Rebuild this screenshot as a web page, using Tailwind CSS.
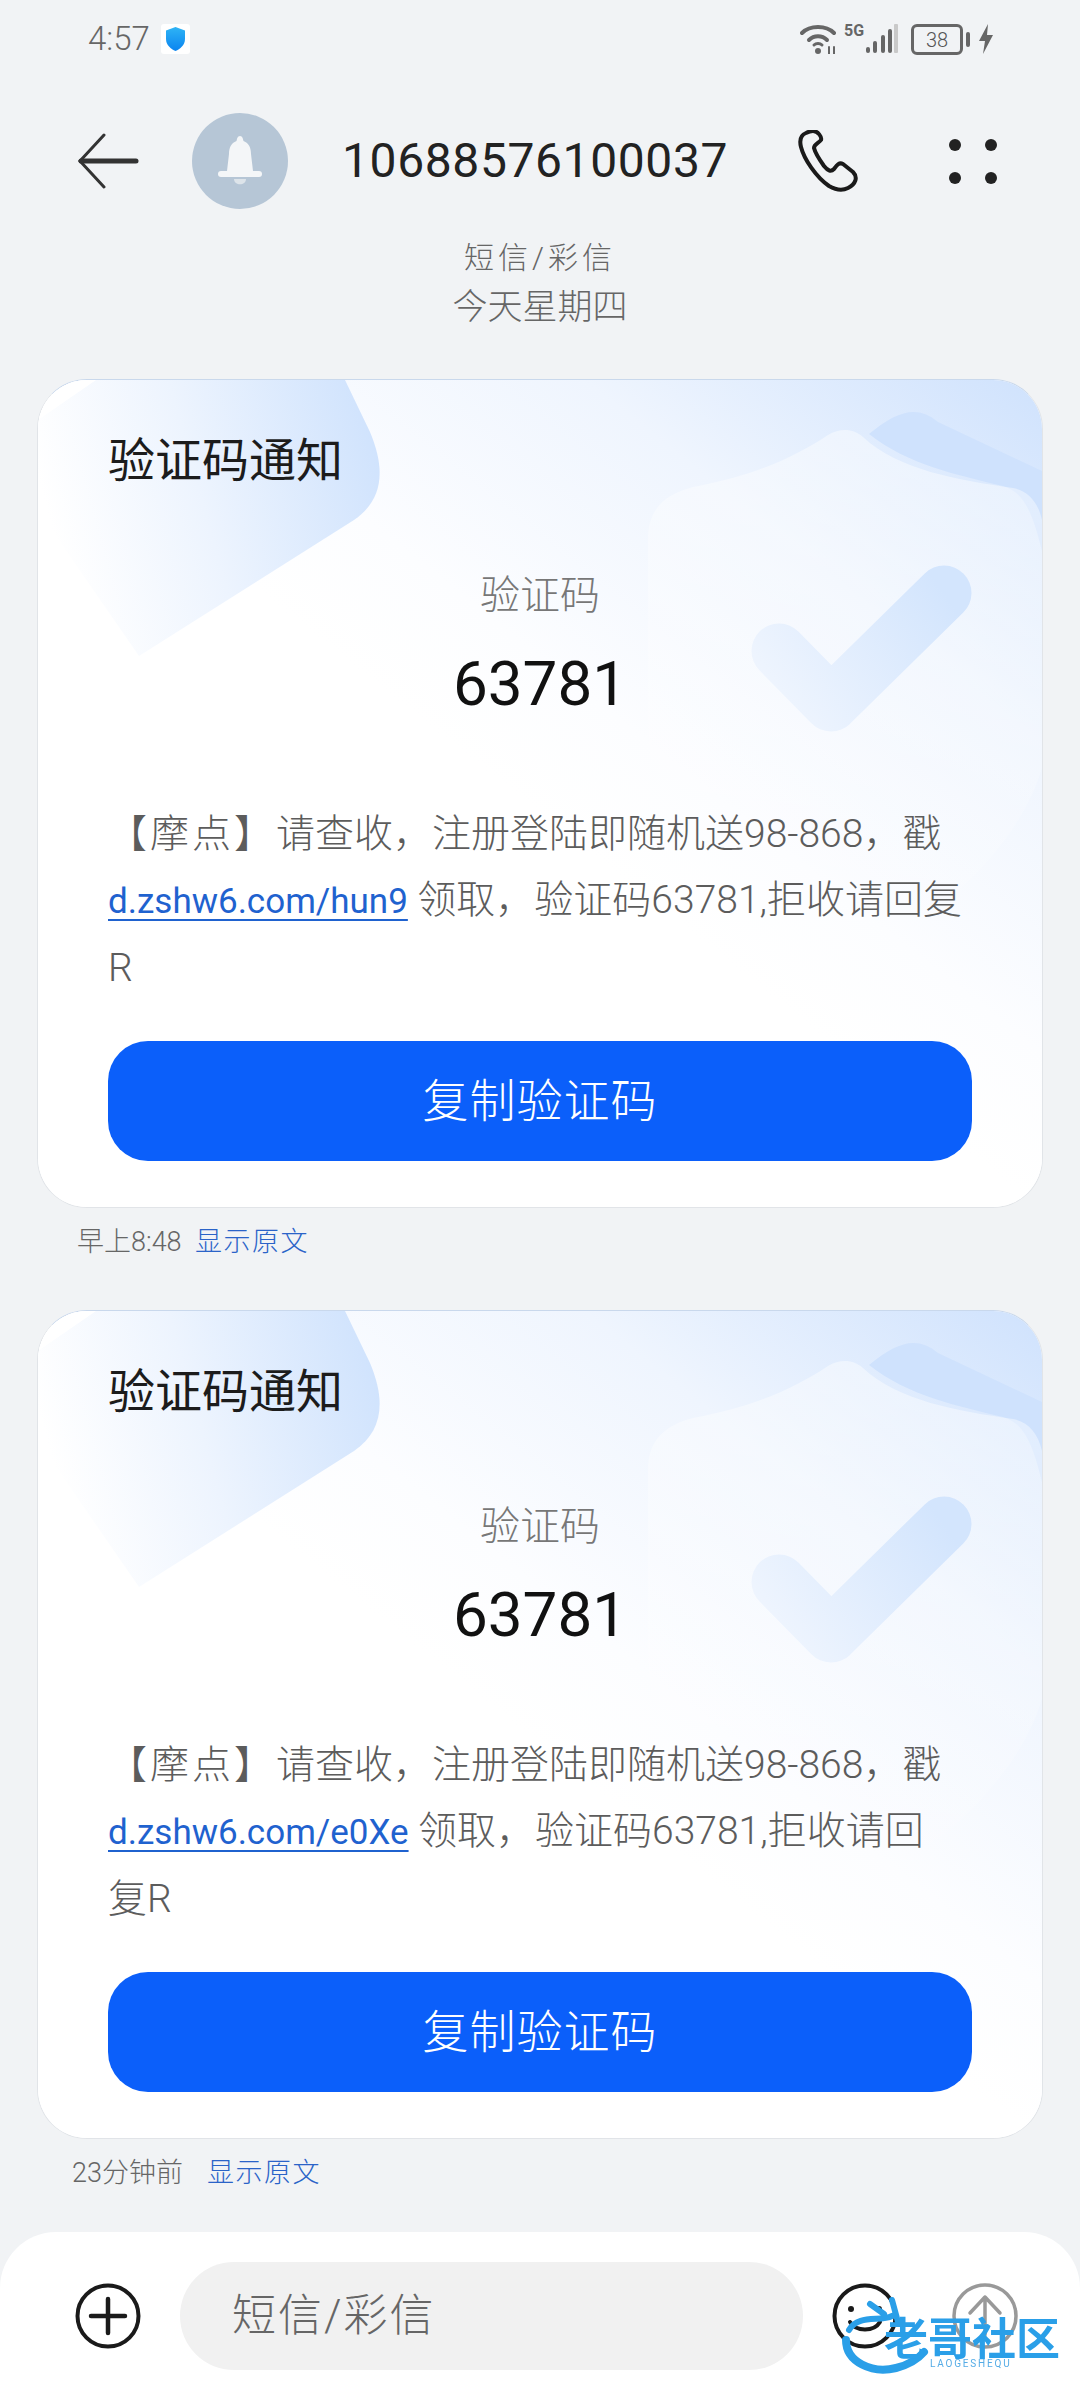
<!DOCTYPE html>
<html lang="zh-CN">

<head>
    <meta charset="UTF-8">
    <meta name="viewport" content="width=device-width, initial-scale=1.0">
    <script src="https://cdn.jsdelivr.net/npm/@tailwindcss/browser@4"></script>
    <title>短信</title>
</head>

<body>
    <div class="relative w-[1080px] h-[2400px] overflow-hidden flex flex-col bg-[#f1f3f5] font-light text-[#555] font-['Roboto','Noto_Sans_CJK_SC',sans-serif]">

        <!-- status bar -->
        <div class="h-[84px] shrink-0 flex items-start pt-[24px]">
            <span class="ml-[88px] w-[66px] text-[33px] leading-[30px] text-[#666]">4:57</span>
            <div class="ml-[7px] w-[29px] h-[30px] rounded-[3px] bg-white flex items-center justify-center">
                <svg class="w-[21px] h-[26px]" viewBox="0 0 21 26"><defs><linearGradient id="sh" x1="0" y1="0" x2="0" y2="1"><stop offset="0" stop-color="#2fb4f5"/><stop offset="1" stop-color="#0a84f0"/></linearGradient></defs><path d="M10.500 1 20 4.500V13C20 19 15 23 10.500 25 6 23 1 19 1 13V4.500Z" fill="url(#sh)"/></svg>
            </div>
            <div class="ml-auto mr-[87px] flex items-start">
                <svg class="w-[38px] h-[30px]" viewBox="0 0 38 30" fill="none" stroke="#666" stroke-linecap="round"><path d="M2 9C10 1 26 1 34 9" stroke-width="4"/><path d="M9 16C14 11 22 11 27 16" stroke-width="4"/><circle cx="18" cy="27" r="3" fill="#666" stroke="none"/><path d="M14 21C16 19 20 19 22 21" stroke-width="3"/><path d="M29 23V30M34 23V30" stroke-width="2"/></svg>
                <span class="ml-[6px] w-[22px] text-[16px] leading-[14px] font-bold text-[#666]">5G</span>
                <svg class="w-[32px] h-[30px]" viewBox="0 0 32 30"><rect x="0" y="23" width="4" height="6" rx="2" fill="#666"/><rect x="7" y="17" width="4" height="12" rx="2" fill="#666"/><rect x="15" y="11" width="4" height="18" rx="2" fill="#666"/><rect x="22" y="5" width="4" height="24" rx="2" fill="#666"/><rect x="28" y="0" width="4" height="29" rx="1" fill="#c9c9c9"/></svg>
                <div class="ml-[13px] w-[52px] h-[31px] rounded-[6px] border-[3px] border-[#666] flex items-center justify-center text-[20px] leading-none text-[#555]">38</div>
                <div class="ml-[3px] mt-[8px] w-[4px] h-[15px] rounded-sm bg-[#666]"></div>
                <svg class="ml-[9px] w-[14px] h-[30px]" viewBox="0 0 14 30"><path d="M9 0 0 17H6L4 30 14 11H8Z" fill="#666"/></svg>
            </div>
        </div>

        <!-- conversation header -->
        <div class="h-[154px] shrink-0 flex items-center">
            <svg class="ml-[77px] w-[62px] h-[56px]" viewBox="0 0 62 56" fill="none" stroke-linecap="round"><path d="M27 2 3 28 27 54" stroke="#333" stroke-width="3"/><path d="M4 28H59" stroke="#333" stroke-width="5"/></svg>
            <div class="ml-[53px] w-[96px] h-[96px] rounded-full bg-[#b6c6d6] flex items-center justify-center">
                <svg class="w-[46px] h-[50px]" viewBox="0 0 46 50"><path d="M23 0C25.500 0 26 3 26.500 5 32 7 34 12 34 18L36 35H10L12 18C12 12 14 7 19.500 5 20 3 20.500 0 23 0Z" fill="#f4f6f8"/><rect x="1" y="35" width="44" height="6" rx="3" fill="#f4f6f8"/><path d="M17 43H29C29 50 17 50 17 43Z" fill="#dde4ea"/></svg>
            </div>
            <span class="ml-[54px] w-[400px] text-[48px] leading-[60px] font-normal tracking-[0.6px] text-[#222]">10688576100037</span>
            <svg class="ml-[56px] w-[60px] h-[62px]" viewBox="0 0 60 62" fill="none"><path d="M8 3C3 5 1 9 3 17 6 29 18 47 31 56 38 60 44 61 50 58 58 54 60 47 55 42L45 34C41 32 39 35 36 39 33 42 30 41 26 36 21 29 17 22 16 18 16 14 21 13 23 10 24 7 20 1 15 1 12 1 10 2 8 3Z" stroke="#1a1a1a" stroke-width="4" stroke-linejoin="round"/></svg>
            <div class="ml-[91px] grid grid-cols-[12px_12px] gap-x-[24px] gap-y-[21px]">
                <div class="w-[12px] h-[12px] rounded-full bg-[#222]"></div>
                <div class="w-[12px] h-[12px] rounded-full bg-[#222]"></div>
                <div class="w-[12px] h-[12px] rounded-full bg-[#222]"></div>
                <div class="w-[12px] h-[12px] rounded-full bg-[#222]"></div>
            </div>
        </div>

        <div class="h-[34px] shrink-0 text-center text-[30px] leading-[40px] tracking-[4px] text-[#666]">短信/彩信</div>
        <div class="mt-[11px] h-[44px] shrink-0 text-center text-[35px] leading-[50px] text-[#666]">今天星期四</div>

        <div id="messages" class="mt-[52px] flex flex-col"></div>

        <!-- compose bar -->
        <div class="mt-auto h-[168px] shrink-0 rounded-t-[56px] bg-white flex items-center">
            <svg class="ml-[75px] w-[66px] h-[66px]" viewBox="0 0 66 66" fill="none" stroke="#1a1a1a"><circle cx="33" cy="33" r="30.500" stroke-width="4"/><path d="M33 16V50M16 33H50" stroke-width="4.500" stroke-linecap="round"/></svg>
            <div class="ml-[39px] w-[623px] h-[108px] rounded-[54px] bg-[#f1f1f1] flex items-center pl-[52px] text-[44px] tracking-[2px] text-[#666]">短信/彩信</div>
            <svg class="ml-[29px] w-[66px] h-[66px]" viewBox="0 0 66 66" fill="none" stroke="#1a1a1a"><circle cx="33" cy="33" r="30.500" stroke-width="4"/><circle cx="19" cy="26" r="3" fill="#1a1a1a" stroke="none"/><circle cx="47" cy="26" r="3" fill="#1a1a1a" stroke="none"/><path d="M18 39C24 49 42 49 48 39" stroke-width="4" stroke-linecap="round"/></svg>
            <svg class="ml-[54px] w-[66px] h-[66px]" viewBox="0 0 66 66" fill="none" stroke="#999"><circle cx="33" cy="33" r="31" stroke-width="3.500"/><path d="M33 52V14M18 30 33 14 48 30" stroke-width="3.500" stroke-linecap="round" stroke-linejoin="round"/></svg>
        </div>

        <!-- watermark -->
        <div class="absolute left-[840px] top-[2296px] w-[230px] h-[80px] blur-[0.6px]">
            <svg class="absolute inset-0 w-[230px] h-[80px]" viewBox="0 0 230 80" fill="none"><path d="M6 44C6 66 32 78 56 72 68 69 78 63 84 56" stroke="#2a9fe8" stroke-width="8" stroke-linecap="round"/><path d="M9 34C18 18 40 26 52 20M30 8 44 18M52 4 58 26" stroke="#2a9fe8" stroke-width="6" stroke-linecap="round"/></svg>
            <span class="absolute left-[44px] top-[26px] whitespace-nowrap text-[44px] leading-[36px] font-bold text-[#2a9fe8]">老哥社区</span>
            <span class="absolute left-[90px] top-[62px] whitespace-nowrap text-[10px] leading-[12px] font-normal tracking-[1.800px] text-[#55ace6]">LAOGESHEQU</span>
        </div>
    </div>

    <script>
        const messages = [
            {
                line1: '请查收\uFF0C注册登陆即随机送98-868\uFF0C戳',
                link: 'd.zshw6.com/hun9',
                line2: '领取\uFF0C验证码63781,拒收请回复',
                line3: 'R',
                time: '早上8:48',
                timePad: 'pl-[77px]',
                timeWidth: 'w-[118px]'
            },
            {
                line1: '请查收\uFF0C注册登陆即随机送98-868\uFF0C戳',
                link: 'd.zshw6.com/e0Xe',
                line2: '领取\uFF0C验证码63781,拒收请回',
                line3: '复R',
                time: '23分钟前',
                timePad: 'pl-[72px]',
                timeWidth: 'w-[135px]'
            }
        ];

        let bucket = '';
        messages.forEach((msg, i) => {
            bucket += `
            <div class="relative mx-[37px] h-[829px] shrink-0 overflow-hidden rounded-[50px] border border-[#e1e4e8] border-t-[#c9d8ec] bg-white px-[70px]">
                <svg class="absolute left-0 top-0 w-[1006px] h-[829px]" viewBox="0 0 1006 829" fill="none">
                    <defs>
                        <linearGradient id="base${i}" gradientUnits="userSpaceOnUse" x1="1006" y1="0" x2="500" y2="640"><stop offset="0" stop-color="#cfe2fd"/><stop offset="0.35" stop-color="#eff5fe"/><stop offset="0.65" stop-color="#fcfdff"/><stop offset="0.8" stop-color="#ffffff"/></linearGradient>
                        <linearGradient id="blob${i}" gradientUnits="userSpaceOnUse" x1="345" y1="80" x2="20" y2="170"><stop offset="0" stop-color="#d0e3fd"/><stop offset="0.55" stop-color="#edf4fe"/><stop offset="1" stop-color="#ffffff"/></linearGradient>
                        <linearGradient id="shield${i}" x1="0.6" y1="0" x2="0.5" y2="1"><stop offset="0" stop-color="#ffffff" stop-opacity="0.45"/><stop offset="1" stop-color="#ffffff" stop-opacity="0.05"/></linearGradient>
                        <linearGradient id="check${i}" gradientUnits="userSpaceOnUse" x1="906" y1="213" x2="741" y2="330"><stop offset="0" stop-color="#d3e5fd"/><stop offset="1" stop-color="#eff5fe"/></linearGradient>
                    </defs>
                    <rect width="1006" height="829" fill="url(#base${i})"/>
                    <path d="M0 0H307L332 52C348 90 345 120 316 140L101 276 0 130Z" fill="url(#blob${i})"/>
                    <path d="M0 40 58 0H0Z" fill="#ffffff"/>
                    <path d="M831 54C860 30 880 25 900 42L1006 92V180C995 130 985 112 965 106 920 95 870 85 831 54Z" fill="#cfe2fd"/>
                    <path d="M610 160C610 130 625 115 655 107 720 95 760 75 790 55 802 48 815 48 825 57 860 90 920 100 975 108 995 112 1006 130 1006 160V380C985 470 880 560 790 590 690 550 610 470 610 340Z" fill="url(#shield${i})"/>
                    <path d="M741 271 793 324 906 213" stroke="url(#check${i})" stroke-width="55" stroke-linecap="round" stroke-linejoin="round"/>
                </svg>

                <div class="relative">
                    <div class="mt-[51px] h-[60px] text-[47px] leading-[60px] font-normal text-[#1c1c1c]">验证码通知</div>
                    <div class="mt-[80px] h-[50px] text-center text-[40px] leading-[50px] text-[#777]">验证码</div>
                    <div class="mt-[23px] h-[80px] text-center text-[62px] leading-[80px] font-normal text-[#111]">63781</div>
                    <div class="mt-[77px] h-[198px] whitespace-nowrap text-[39px] leading-[66px] text-[#5c5c5c]">
                        <span class="tracking-[3px]">【摩点】</span>${msg.line1}<br>
                        <a class="text-[35px] font-normal text-[#1f62cf] underline decoration-2 underline-offset-[6px]">${msg.link}</a> ${msg.line2}<br>
                        ${msg.line3}
                    </div>
                    <div class="mt-[42px] h-[120px] rounded-[40px] bg-[#0b5ffa] flex items-center justify-center text-[46px] tracking-[1px] text-white">复制验证码</div>
                </div>
            </div>
            <div class="h-[68px] shrink-0 flex items-center ${msg.timePad} text-[27px] text-[#666]">
                <span class="${msg.timeWidth}">${msg.time}</span>
                <span class="tracking-[1.500px] text-[#2a63c8]">显示原文</span>
            </div>
            <div class="h-[34px] shrink-0 last:hidden"></div>`;
        });
        document.getElementById('messages').innerHTML = bucket;
    </script>
</body>

</html>
